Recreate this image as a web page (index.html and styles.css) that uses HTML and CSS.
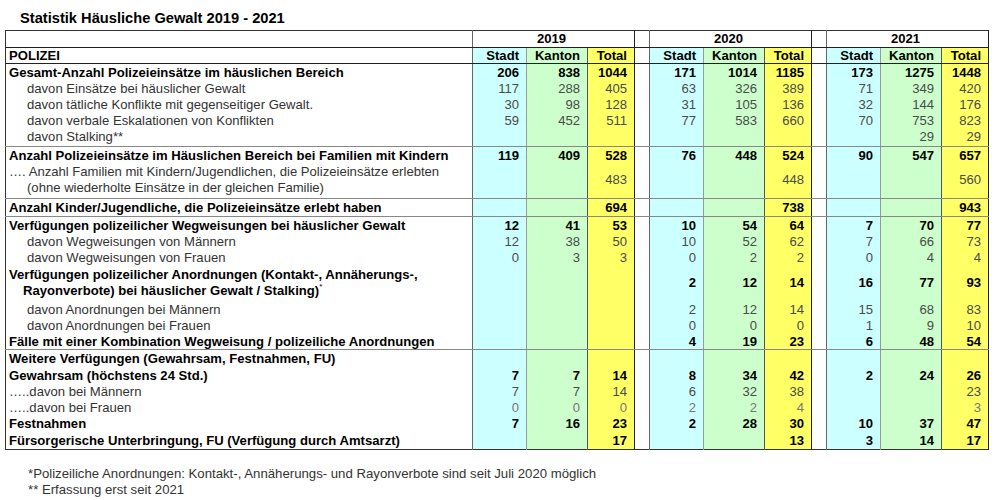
FILE: index.html
```html
<!DOCTYPE html>
<html lang="de">
<head>
<meta charset="utf-8">
<title>Statistik Häusliche Gewalt 2019 - 2021</title>
<link rel="stylesheet" href="styles.css">
</head>
<body>
<div class="page">
  <h1 class="title">Statistik Häusliche Gewalt 2019 - 2021</h1>
  <table class="stats">
    <colgroup>
      <col class="c-label">
      <col class="c-stadt"><col class="c-kanton"><col class="c-total"><col class="c-gap">
      <col class="c-stadt"><col class="c-kanton"><col class="c-total"><col class="c-gap">
      <col class="c-stadt"><col class="c-kanton"><col class="c-total">
    </colgroup>
    <thead>
      <tr class="yr">
        <th class="lbl"></th><th colspan="3">2019</th><th class="gap"></th><th colspan="3">2020</th><th class="gap"></th><th colspan="3">2021</th>
      </tr>
      <tr class="hd">
        <th class="lbl">POLIZEI</th>
        <th>Stadt</th><th>Kanton</th><th>Total</th><th class="gap"></th>
        <th>Stadt</th><th>Kanton</th><th>Total</th><th class="gap"></th>
        <th>Stadt</th><th>Kanton</th><th>Total</th>
      </tr>
    </thead>
    <tbody class="s1">
      <tr class="main">
        <td class="lbl">Gesamt-Anzahl Polizeieinsätze im häuslichen Bereich</td>
        <td>206</td><td>838</td><td>1044</td><td></td><td>171</td><td>1014</td><td>1185</td><td></td><td>173</td><td>1275</td><td>1448</td>
      </tr>
      <tr class="sub">
        <td class="lbl ind">davon Einsätze bei häuslicher Gewalt</td>
        <td>117</td><td>288</td><td>405</td><td></td><td>63</td><td>326</td><td>389</td><td></td><td>71</td><td>349</td><td>420</td>
      </tr>
      <tr class="sub">
        <td class="lbl ind">davon tätliche Konflikte mit gegenseitiger Gewalt.</td>
        <td>30</td><td>98</td><td>128</td><td></td><td>31</td><td>105</td><td>136</td><td></td><td>32</td><td>144</td><td>176</td>
      </tr>
      <tr class="sub">
        <td class="lbl ind">davon verbale Eskalationen von Konflikten</td>
        <td>59</td><td>452</td><td>511</td><td></td><td>77</td><td>583</td><td>660</td><td></td><td>70</td><td>753</td><td>823</td>
      </tr>
      <tr class="sub last">
        <td class="lbl ind">davon Stalking**</td>
        <td></td><td></td><td></td><td></td><td></td><td></td><td></td><td></td><td></td><td>29</td><td>29</td>
      </tr>
    </tbody>
    <tbody class="s2">
      <tr class="main">
        <td class="lbl">Anzahl Polizeieinsätze im Häuslichen Bereich bei Familien mit Kindern</td>
        <td>119</td><td>409</td><td>528</td><td></td><td>76</td><td>448</td><td>524</td><td></td><td>90</td><td>547</td><td>657</td>
      </tr>
      <tr class="sub two">
        <td class="lbl">…. Anzahl Familien mit Kindern/Jugendlichen, die Polizeieinsätze erlebten<br><span class="ind2">(ohne wiederholte Einsätze in der gleichen Familie)</span></td>
        <td></td><td></td><td>483</td><td></td><td></td><td></td><td>448</td><td></td><td></td><td></td><td>560</td>
      </tr>
    </tbody>
    <tbody class="s3">
      <tr class="main">
        <td class="lbl">Anzahl Kinder/Jugendliche, die Polizeieinsätze erlebt haben</td>
        <td></td><td></td><td>694</td><td></td><td></td><td></td><td>738</td><td></td><td></td><td></td><td>943</td>
      </tr>
    </tbody>
    <tbody class="s4">
      <tr class="main">
        <td class="lbl">Verfügungen polizeilicher Wegweisungen bei häuslicher Gewalt</td>
        <td>12</td><td>41</td><td>53</td><td></td><td>10</td><td>54</td><td>64</td><td></td><td>7</td><td>70</td><td>77</td>
      </tr>
      <tr class="sub">
        <td class="lbl ind">davon Wegweisungen von Männern</td>
        <td>12</td><td>38</td><td>50</td><td></td><td>10</td><td>52</td><td>62</td><td></td><td>7</td><td>66</td><td>73</td>
      </tr>
      <tr class="sub">
        <td class="lbl ind">davon Wegweisungen von Frauen</td>
        <td>0</td><td>3</td><td>3</td><td></td><td>0</td><td>2</td><td>2</td><td></td><td>0</td><td>4</td><td>4</td>
      </tr>
      <tr class="main two">
        <td class="lbl">Verfügungen polizeilicher Anordnungen (Kontakt-, Annäherungs-,<br><span class="ind3">Rayonverbote) bei häuslicher Gewalt / Stalking)<sup class="fn">*</sup></span></td>
        <td></td><td></td><td></td><td></td><td>2</td><td>12</td><td>14</td><td></td><td>16</td><td>77</td><td>93</td>
      </tr>
      <tr class="sub">
        <td class="lbl ind">davon Anordnungen bei Männern</td>
        <td></td><td></td><td></td><td></td><td>2</td><td>12</td><td>14</td><td></td><td>15</td><td>68</td><td>83</td>
      </tr>
      <tr class="sub">
        <td class="lbl ind">davon Anordnungen bei Frauen</td>
        <td></td><td></td><td></td><td></td><td>0</td><td>0</td><td>0</td><td></td><td>1</td><td>9</td><td>10</td>
      </tr>
      <tr class="main">
        <td class="lbl">Fälle mit einer Kombination Wegweisung / polizeiliche Anordnungen</td>
        <td></td><td></td><td></td><td></td><td>4</td><td>19</td><td>23</td><td></td><td>6</td><td>48</td><td>54</td>
      </tr>
    </tbody>
    <tbody class="s5">
      <tr class="main pad">
        <td class="lbl">Weitere Verfügungen (Gewahrsam, Festnahmen, FU)</td>
        <td></td><td></td><td></td><td></td><td></td><td></td><td></td><td></td><td></td><td></td><td></td>
      </tr>
      <tr class="main">
        <td class="lbl">Gewahrsam (höchstens 24 Std.)</td>
        <td>7</td><td>7</td><td>14</td><td></td><td>8</td><td>34</td><td>42</td><td></td><td>2</td><td>24</td><td>26</td>
      </tr>
      <tr class="sub">
        <td class="lbl">…..davon bei Männern</td>
        <td>7</td><td>7</td><td>14</td><td></td><td>6</td><td>32</td><td>38</td><td></td><td></td><td></td><td>23</td>
      </tr>
      <tr class="sub light">
        <td class="lbl">…..davon bei Frauen</td>
        <td>0</td><td>0</td><td>0</td><td></td><td>2</td><td>2</td><td>4</td><td></td><td></td><td></td><td>3</td>
      </tr>
      <tr class="main pad">
        <td class="lbl">Festnahmen</td>
        <td>7</td><td>16</td><td>23</td><td></td><td>2</td><td>28</td><td>30</td><td></td><td>10</td><td>37</td><td>47</td>
      </tr>
      <tr class="main pad">
        <td class="lbl">Fürsorgerische Unterbringung, FU (Verfügung durch Amtsarzt)</td>
        <td></td><td></td><td>17</td><td></td><td></td><td></td><td>13</td><td></td><td>3</td><td>14</td><td>17</td>
      </tr>
    </tbody>
  </table>
  <div class="notes">
    <p>*Polizeiliche Anordnungen: Kontakt-, Annäherungs- und Rayonverbote sind seit Juli 2020 möglich</p>
    <p>** Erfassung erst seit 2021</p>
  </div>
</div>
</body>
</html>
```

FILE: styles.css
```css
html, body {
  margin: 0;
  padding: 0;
  background: #ffffff;
}

body {
  font-family: "Liberation Sans", Arial, sans-serif;
  font-size: 13.1px;
  color: #000;
}

.page {
  padding: 10px 0 0 5px;
}

.title {
  margin: 0 0 4px 0;
  padding-left: 15px;
  font-size: 14.67px;
  line-height: 16px;
  font-weight: bold;
}

.stats {
  border-collapse: collapse;
  table-layout: fixed;
  width: 984px;
  border: 1px solid #333;
}

.c-label { width: 467px; border-right: 1px solid #666; }
.c-stadt { width: 54px; background: #ccffff; border-left: 1px solid #666; }
.c-kanton { width: 61px; background: #ccffcc; border-left: 1px solid #999; }
.c-total { width: 47px; background: #ffff66; border-left: 1px solid #555; border-right: 1px solid #222; }
.c-gap { width: 15px; background: #ffffff; }

.stats tbody {
  border-top: 1px solid #888;
}

.stats th,
.stats td {
  padding: 0 7px 0 3px;
  line-height: 16px;
  white-space: nowrap;
  text-align: right;
  vertical-align: middle;
}

.stats tbody td {
  padding-top: 1px;
  line-height: 15px;
}

.stats th {
  font-weight: bold;
}

.stats .lbl {
  text-align: left;
}

.yr th {
  background: #fff;
  text-align: center;
  border-bottom: 1px solid #222;
  line-height: 16px;
}

.hd th {
  border-bottom: 1px solid #222;
  padding-top: 1px;
  line-height: 14px;
}

.yr th.lbl,
.hd th.lbl,
.stats .gap {
  background: #fff;
}

.main td {
  font-weight: bold;
  color: #000;
}

.sub td {
  color: #4a4a4a;
}

.sub td.lbl {
  color: #333;
}

.sub.light td:not(.lbl) {
  color: #777;
}

.s1 .last td {
  padding-bottom: 2px;
}

.stats .two td {
  line-height: 16px;
}

.s2 .two td {
  padding-top: 1px;
  padding-bottom: 2px;
}

.s3 td {
  padding-top: 2px;
  padding-bottom: 1px;
}

.s4 .two td {
  padding-top: 2px;
  padding-bottom: 2px;
}

.s5 .pad td {
  padding-bottom: 1px;
}

.ind {
  padding-left: 21px !important;
}

.ind2 {
  padding-left: 18px;
}

.ind3 {
  padding-left: 14px;
}

.fn {
  font-size: 8px;
  vertical-align: top;
  line-height: 8px;
  font-weight: normal;
}

.notes {
  margin-top: 16px;
  padding-left: 23px;
  color: #333;
  font-size: 13.2px;
  line-height: 16px;
}

.notes p {
  margin: 0;
}
```
